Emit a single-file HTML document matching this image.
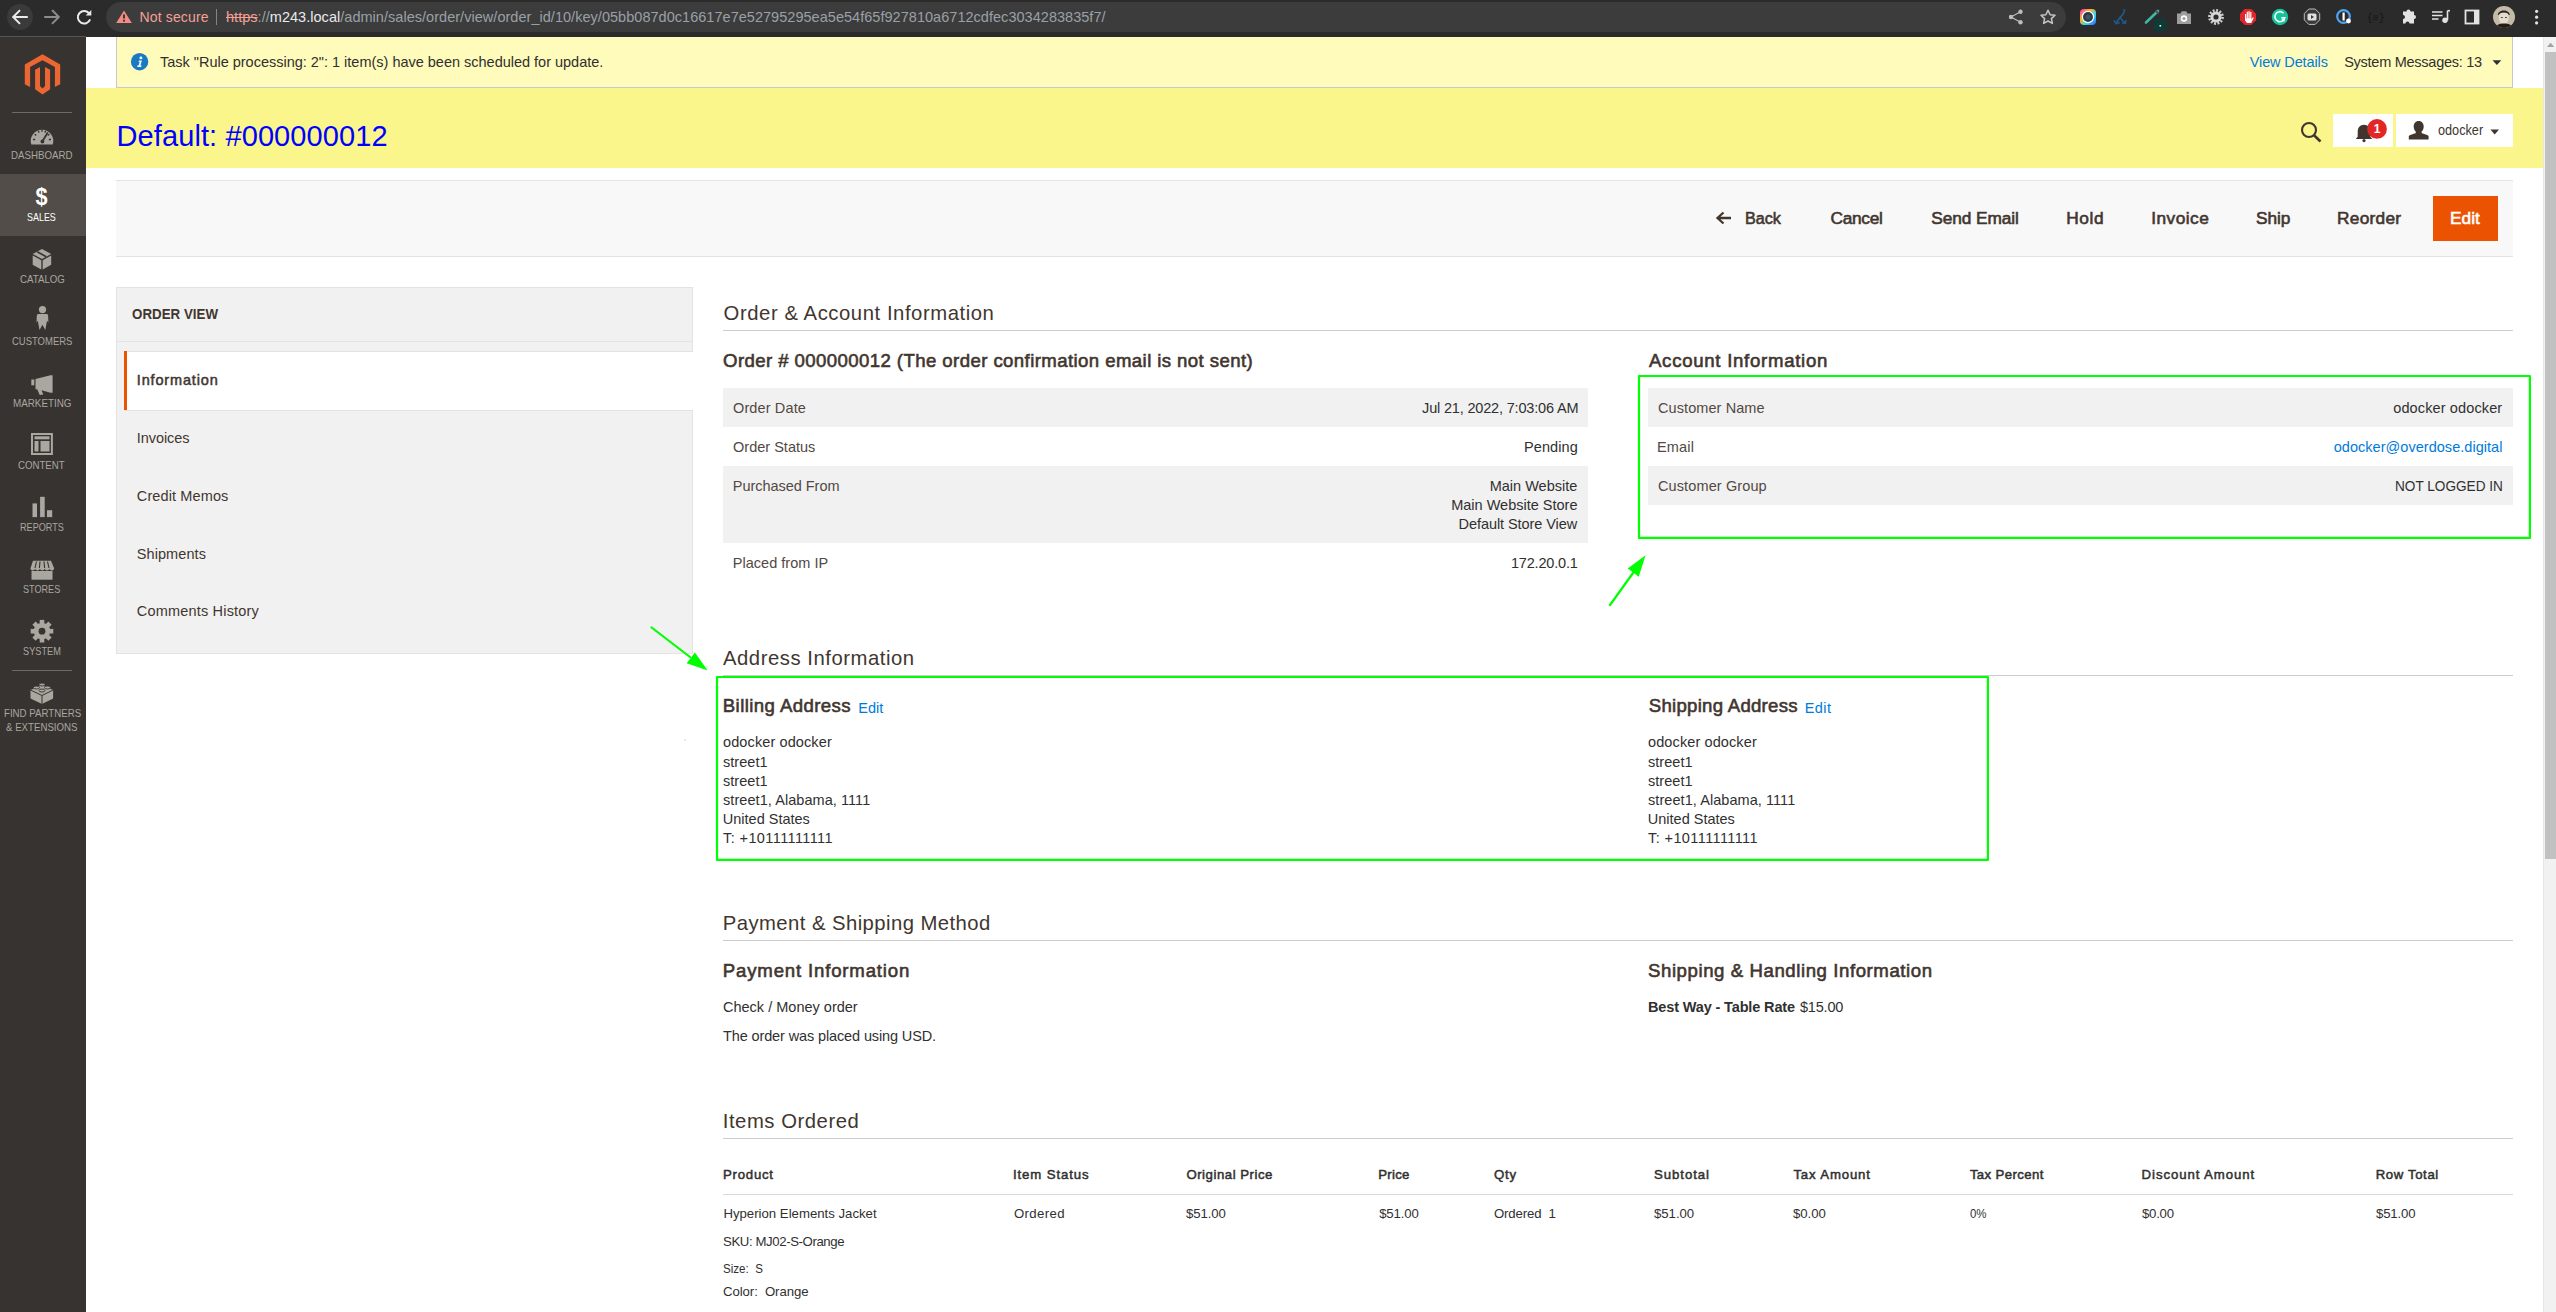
<!DOCTYPE html>
<html><head><meta charset="utf-8"><title>Order #000000012</title>
<style>
html,body{margin:0;padding:0}
body{width:2556px;height:1312px;overflow:hidden;position:relative;background:#fff;font-family:"Liberation Sans",sans-serif}
.b{position:absolute}
.t{position:absolute;white-space:nowrap;line-height:1;font-family:"Liberation Sans",sans-serif}
svg{position:absolute;left:0;top:0}

</style></head><body>
<!-- browser toolbar -->
<div class="b" style="left:0;top:0;width:2556px;height:37px;background:#2b2b2b"></div>

<div class="b" style="left:7px;top:4px;width:26px;height:26px;border-radius:13px;background:#3a3a3a"></div>
<div class="b" style="left:106px;top:2px;width:1960px;height:30px;border-radius:15px;background:#3c3c3c"></div>
<!-- sidebar -->
<div class="b" style="left:0;top:36px;width:86px;height:1276px;background:#373330"></div>
<div class="b" style="left:0;top:36px;width:86px;height:1px;background:#555555"></div>
<div class="b" style="left:0;top:174px;width:86px;height:62px;background:#524d49"></div>
<div class="b" style="left:12px;top:112px;width:60px;height:1px;background:#736963"></div>
<div class="b" style="left:12px;top:670px;width:60px;height:1px;background:#736963"></div>
<!-- system message -->
<div class="b" style="left:116px;top:37px;width:2395px;height:50px;background:#fffbbb;border:1px solid #c8c8d0;border-top:0"></div>
<!-- header -->
<div class="b" style="left:86px;top:88px;width:2457px;height:80px;background:#fbf68c"></div>
<div class="b" style="left:2333px;top:114px;width:60px;height:33px;background:#fff"></div>
<div class="b" style="left:2396px;top:114px;width:117px;height:33px;background:#fff"></div>
<!-- action bar -->
<div class="b" style="left:116px;top:180px;width:2397px;height:75px;background:#f8f8f8;border-top:1px solid #e3e3e3;border-bottom:1px solid #e3e3e3"></div>
<div class="b" style="left:2433px;top:196px;width:65px;height:45px;background:#eb5202"></div>
<!-- order view panel -->
<div class="b" style="left:116px;top:287px;width:575px;height:365px;background:#f1f1f1;border:1px solid #e3e3e3"></div>
<div class="b" style="left:117px;top:341px;width:575px;height:1px;background:#e3e3e3"></div>
<div class="b" style="left:124px;top:351px;width:569px;height:58px;background:#fff;border-top:1px solid #e3e3e3;border-bottom:1px solid #e3e3e3"></div>
<div class="b" style="left:124px;top:351px;width:3px;height:59px;background:#eb5202"></div>
<!-- section lines -->
<div class="b" style="left:723px;top:330px;width:1790px;height:1px;background:#cccccc"></div>
<div class="b" style="left:723px;top:675px;width:1790px;height:1px;background:#cccccc"></div>
<div class="b" style="left:723px;top:940px;width:1790px;height:1px;background:#cccccc"></div>
<div class="b" style="left:723px;top:1138px;width:1790px;height:1px;background:#cccccc"></div>
<div class="b" style="left:723px;top:1194px;width:1790px;height:1px;background:#dadada"></div>
<!-- table rows -->
<div class="b" style="left:723px;top:388px;width:865px;height:39px;background:#f1f1f1"></div>
<div class="b" style="left:723px;top:466px;width:865px;height:77px;background:#f1f1f1"></div>
<div class="b" style="left:1648px;top:388px;width:865px;height:39px;background:#f1f1f1"></div>
<div class="b" style="left:1648px;top:466px;width:865px;height:39px;background:#f1f1f1"></div>
<!-- scrollbar -->
<div class="b" style="left:2543px;top:37px;width:13px;height:1275px;background:#f1f1f1;border-left:1px solid #e6e6e6;box-sizing:border-box"></div>
<div class="b" style="left:2545px;top:52px;width:11px;height:807px;background:#c1c1c1"></div>

<svg width="2556" height="1312" viewBox="0 0 2556 1312">
<!-- browser nav icons -->
<g fill="none" stroke="#e8eaed" stroke-width="2" stroke-linecap="square">
 <path d="M26.8 17H14.3M19.3 10.8L13.2 17l6.1 6.2"/>
</g>
<g fill="none" stroke="#8c8c8c" stroke-width="2" stroke-linecap="square">
 <path d="M45.2 17h12.5M52.7 10.8L58.8 17l-6.1 6.2"/>
</g>
<g fill="none" stroke="#e8eaed" stroke-width="2">
 <path d="M89.3 13.6A6.3 6.3 0 1 0 90.1 19.4"/>
</g>
<path d="M91.3 10v5.6h-5.6z" fill="#e8eaed"/>
<path d="M124 10.6L131.8 23H116.2z" fill="#f28b82"/>
<rect x="123.1" y="14.5" width="1.8" height="4" fill="#2b2b2b"/><rect x="123.1" y="19.8" width="1.8" height="1.8" fill="#2b2b2b"/>
<rect x="216" y="9" width="1" height="16" fill="#80868b"/>
<!-- share / star -->
<g fill="#bdbdbd"><circle cx="2011" cy="17" r="2.2"/><circle cx="2020.5" cy="11.8" r="2.2"/><circle cx="2020.5" cy="22.3" r="2.2"/></g>
<path d="M2011 17L2020.5 11.8M2011 17L2020.5 22.3" stroke="#bdbdbd" stroke-width="1.2"/>
<path d="M2048 10.2l2.1 4.5 4.9.6-3.6 3.3 1 4.8-4.4-2.4-4.4 2.4 1-4.8-3.6-3.3 4.9-.6z" fill="none" stroke="#c4c7c5" stroke-width="1.5" stroke-linejoin="round"/>
<!-- extensions -->
<defs>
 <linearGradient id="rb" x1="0" y1="0" x2="1" y2="1"><stop offset="0" stop-color="#ff2bd6"/><stop offset=".35" stop-color="#ffb21e"/><stop offset=".65" stop-color="#2fd3f5"/><stop offset="1" stop-color="#3b5bff"/></linearGradient>
 <radialGradient id="av" cx=".5" cy=".45" r=".55"><stop offset="0" stop-color="#d9d2c6"/><stop offset=".45" stop-color="#a59a8a"/><stop offset="1" stop-color="#3b3128"/></radialGradient>
</defs>
<rect x="2080" y="9" width="16" height="16" rx="4" fill="url(#rb)"/>
<circle cx="2088" cy="17" r="6.2" fill="#fff"/><circle cx="2088" cy="17" r="5" fill="#2e3b46"/><circle cx="2088" cy="17" r="2.5" fill="#3e5566"/>
<path d="M2124.3 9c.8 3.5-1.5 6-4.3 8.5l-3.8 5.5M2120 17.5l4.8 5.5" fill="none" stroke="#1d5a8a" stroke-width="1.7"/><path d="M2114 20.5l2.2 3.2 3.5-1.3M2122 22.8l3.3.5.9-3.4" fill="none" stroke="#1d5a8a" stroke-width="1.6"/>
<path d="M2146 22.5L2158 11" stroke="#3fb7a6" stroke-width="2.6" stroke-linecap="round"/>
<path d="M2155.5 10.5l3 3" stroke="#555" stroke-width="2.4"/>
<rect x="2154" y="19" width="12" height="12" rx="1.5" fill="#0d3b35"/><rect x="2159.5" y="25" width="1.6" height="1.6" fill="#fff"/>
<path d="M2177 13.5h3.5l1.3-2.3h4.4l1.3 2.3h3.5v10.5h-14z" fill="#9e9e9e"/><circle cx="2184" cy="18.5" r="3.2" fill="#fff"/><circle cx="2184" cy="18.5" r="1.6" fill="#9e9e9e"/>
<circle cx="2216" cy="17" r="6.6" fill="none" stroke="#cfcfcf" stroke-width="2.6" stroke-dasharray="1.9 1.55"/><circle cx="2216" cy="17" r="5.6" fill="#d6d6d6"/><circle cx="2216" cy="17" r="2.6" fill="#2b2b2b"/>
<path d="M2244.7 9h6.6l4.7 4.7v6.6l-4.7 4.7h-6.6l-4.7-4.7v-6.6z" fill="#e3262b"/>
<path d="M2245 20.5v-6.5h1.2v4.5h.5v-6.8h1.2v6.6h.5v-7.1h1.3v7.1h.5v-6.3h1.2v7.5l1.4-2.2 1 .5-2.6 5.2h-4.2z" fill="#fff"/>
<circle cx="2280" cy="17" r="8.2" fill="#15c39a"/><path d="M2283.5 13.2a5 5 0 1 0 1.3 4.5h-3.5" fill="none" stroke="#fff" stroke-width="1.6"/><path d="M2282 19l2.5 2.3" stroke="#fff" stroke-width="1.5"/>
<path d="M2308.8 9h6.4l4.5 4.5v6.4l-4.5 4.5h-6.4l-4.5-4.5v-6.4z" fill="#3a3a3a" stroke="#bdbdbd" stroke-width="1"/>
<rect x="2307.5" y="13.5" width="9" height="7" rx="1.5" fill="#e0e0e0"/><path d="M2311 15v4l3-2z" fill="#3a3a3a"/>
<circle cx="2343.5" cy="16.5" r="6.3" fill="none" stroke="#4fa3f7" stroke-width="2.2"/><rect x="2342.5" y="12.5" width="2.2" height="8" fill="#fff"/><circle cx="2348.5" cy="21" r="2.4" fill="#fff"/>
<text x="2375.7" y="21" font-family="Liberation Mono" font-size="10" fill="#151515" text-anchor="middle">{≡}</text>
<path d="M2403 11.5h3.5a2 2 0 0 1 4 0h3.5v3.5a2 2 0 0 1 0 4v4.5h-4.5a2 2 0 0 0-4 0H2403v-4.5a2 2 0 0 0 0-4z" fill="#e3e3e3"/>
<path d="M2432 12h10.5M2432 15.5h10.5M2432 19h6.5" stroke="#e3e3e3" stroke-width="1.6"/><path d="M2447.5 10.7v9.5" stroke="#e3e3e3" stroke-width="1.6"/><path d="M2447.5 10.7h2.5" stroke="#e3e3e3" stroke-width="1.6"/><circle cx="2445" cy="20.3" r="2.7" fill="#e3e3e3"/>
<rect x="2465.5" y="10.5" width="13" height="13" fill="none" stroke="#e3e3e3" stroke-width="1.8"/><rect x="2474" y="10.5" width="4.5" height="13" fill="#e3e3e3"/>
<clipPath id="avc"><circle cx="2504" cy="17" r="11"/></clipPath><g clip-path="url(#avc)"><rect x="2493" y="6" width="22" height="22" fill="#c4baa8"/><ellipse cx="2503.8" cy="17.5" rx="5" ry="6.8" fill="#e3dccf"/><path d="M2497.8 15c.3-6 11.7-6 12 0l-1.2-.2c-1-3-8.4-3-9.6 0z" fill="#2e251e"/><path d="M2494 30c1.5-5 5-6.5 10-6.5s8.5 1.5 10 6.5z" fill="#241d17"/><path d="M2500.8 17.5h2M2505 17.5h2" stroke="#5a4a3c" stroke-width="1"/></g>
<g fill="#e3e3e3"><circle cx="2536.6" cy="11.3" r="1.6"/><circle cx="2536.6" cy="17.2" r="1.6"/><circle cx="2536.6" cy="22.9" r="1.6"/></g>

<!-- magento logo -->
<g fill="#ec6631">
 <path d="M42.5 54.3L60.2 64.4V84.2L54.9 86.9V67.1L42.5 60.2L30.1 67.1V86.9L24.8 84.2V64.4Z"/>
 <path d="M35.1 69.7L40 67.1V86.1L42.5 88.4L45 86.1V67.1L50.1 69.7V89.2L42.5 94.5L35.1 89.2Z"/>
</g>
<!-- sidebar icons -->
<g fill="#aaa6a0">
 <path d="M31.3 144.6A11.3 11.3 0 1 1 52.7 144.6Z"/>
 <path d="M33 139.5h2.2M34.6 134.2l1.7 1.2M38.3 130.9l.8 1.7M42 129.9v1.9M45.7 130.9l-.8 1.7M49.4 134.2l-1.7 1.2M51 139.5h-2.2" stroke="#373330" stroke-width="1.3"/>
 <path d="M47.8 132.5L42.6 141" stroke="#373330" stroke-width="1.8"/><circle cx="42.4" cy="141.5" r="1.9" fill="#373330"/>
 <text x="41.6" y="205" font-family="Liberation Sans" font-weight="700" font-size="24" fill="#ffffff" text-anchor="middle" transform="translate(41.6 0) scale(0.9 1) translate(-41.6 0)">$</text>
 <path d="M32.7 254L42 249L51.2 254L42 259Z"/><path d="M32.7 255.5L41.3 260.3V269.5L32.7 264.7Z"/><path d="M51.2 255.5L42.7 260.3V269.5L51.2 264.7Z"/>
 <path d="M37.2 251.7l9 5" stroke="#373330" stroke-width="1.6"/>
 <circle cx="42.5" cy="309.6" r="3.6"/><path d="M38.3 314H46.7Q48 314 48.1 315.5L48.4 322.4L47 320.8L45.3 330L42.4 324.7L39.5 330L37.8 320.8L36.5 322.4L36.8 315.5Q36.9 314 38.3 314Z"/>
 <path d="M31.3 379.5h3v5.8h-3z"/><path d="M35.5 379l15-3.8h2.1v17.6h-2.1l-9-2.5 1.8 4.3-3.6.5-2.5-5.8h-1.7z"/>
 <path d="M31 432.9h21.9v22H31zM33 434.9v18h17.9v-18z"/><rect x="34.5" y="436.3" width="15" height="3"/><rect x="34.5" y="441" width="4" height="10.5"/><rect x="40.5" y="441" width="9" height="10.5"/>
 <rect x="32.5" y="503.4" width="4.5" height="13.7"/><rect x="40.1" y="496.8" width="4.6" height="20.3"/><rect x="47" y="510.2" width="5.2" height="6.9"/>
 <path d="M33 560.7h18l3.1 7.5c0 1.5-1 2.2-2.3 2.2-1.2 0-2-.8-2.3-1.7-.4.9-1.2 1.7-2.4 1.7s-2-.8-2.4-1.7c-.4.9-1.2 1.7-2.4 1.7s-2-.8-2.4-1.7c-.4.9-1.2 1.7-2.4 1.7s-2-.8-2.4-1.7c-.3.9-1.1 1.7-2.3 1.7-1.3 0-2.3-.7-2.3-2.2z"/>
 <rect x="31.5" y="571" width="21" height="8.7"/>
 <path d="M36.5 561.5l-1.5 6.5M40 561.5l-.6 6.5M44 561.5l.6 6.5M47.5 561.5l1.5 6.5" stroke="#373330" stroke-width="1.1"/>
 <circle cx="42" cy="631.2" r="8.3"/>
 <g transform="translate(42 631.2)"><rect x="-2.3" y="-11.3" width="4.6" height="5"/><rect x="-2.3" y="-11.3" width="4.6" height="5" transform="rotate(45)"/><rect x="-2.3" y="-11.3" width="4.6" height="5" transform="rotate(90)"/><rect x="-2.3" y="-11.3" width="4.6" height="5" transform="rotate(135)"/><rect x="-2.3" y="-11.3" width="4.6" height="5" transform="rotate(180)"/><rect x="-2.3" y="-11.3" width="4.6" height="5" transform="rotate(225)"/><rect x="-2.3" y="-11.3" width="4.6" height="5" transform="rotate(270)"/><rect x="-2.3" y="-11.3" width="4.6" height="5" transform="rotate(315)"/></g>
 <circle cx="42" cy="631.2" r="3.4" fill="#373330"/>
 <path d="M30.5 690L42 685L53.1 690V698.5L42 704L30.5 698.5Z"/>
 <path d="M30.5 690L42 695.5L53.1 690M42 695.5V704" fill="none" stroke="#373330" stroke-width="1"/>
 <g stroke="#373330" stroke-width=".9"><ellipse cx="42" cy="684.5" rx="3" ry="1.5"/><ellipse cx="36.5" cy="687.5" rx="3" ry="1.5"/><ellipse cx="47.5" cy="687.5" rx="3" ry="1.5"/><ellipse cx="42" cy="690.5" rx="3" ry="1.5"/></g>
</g>
<!-- info icon -->
<circle cx="139.6" cy="61.7" r="8.7" fill="#1979c3"/>
<circle cx="140.9" cy="57.9" r="1.45" fill="#fff"/><path d="M138.9 60.4h3l-1.5 5.1h1.1l-.3 1.4h-4l.3-1.4h1.1l1.1-3.8h-1.1z" fill="#fff"/>
<path d="M2492.5 60.3h8.8l-4.4 4.7z" fill="#303030"/>
<!-- header icons -->
<circle cx="2309" cy="130" r="7" fill="none" stroke="#41362f" stroke-width="2.1"/>
<path d="M2314 135.2l6.5 6.3" stroke="#41362f" stroke-width="2.6"/>
<path d="M2364 124.7c-4 0-6.3 3-6.3 7.2v4.8l-2 2.3h16.6l-2-2.3v-4.8c0-4.2-2.3-7.2-6.3-7.2z" fill="#41362f"/><circle cx="2364" cy="140.6" r="1.6" fill="#41362f"/>
<circle cx="2377" cy="128.9" r="9.9" fill="#e22626"/>
<text x="2377" y="133.3" font-family="Liberation Sans" font-weight="700" font-size="12" fill="#fff" text-anchor="middle">1</text>
<path d="M2418.7 121c-3.3 0-5 2.5-5 5.5 0 2.2.8 4 2.2 5.3l-.3 1.5c-2.5.7-5.3 1.6-6.8 2.6v3.5h19.8v-3.5c-1.5-1-4.3-1.9-6.8-2.6l-.3-1.5c1.4-1.3 2.2-3.1 2.2-5.3 0-3-1.7-5.5-5-5.5z" fill="#41362f"/>
<path d="M2490.4 129.5h8.6l-4.3 5z" fill="#41362f"/>
<!-- action bar back arrow -->
<path d="M1731 218H1718.5M1723.5 212.5L1717.5 218l6 5.5" fill="none" stroke="#41362f" stroke-width="2.3"/>
<!-- scrollbar arrow -->
<path d="M2547 47h7.3l-3.65-4.2z" fill="#a3a3a3"/>
<!-- annotations -->
<g fill="none" stroke="#00ff00" stroke-width="2.2" stroke-linejoin="round">
 <rect x="1639" y="376" width="890.9" height="161.9"/>
 <rect x="717" y="677" width="1270.9" height="182.9"/>
 <path d="M1610 605L1633 573M651.6 627.5L690 657" stroke-linecap="round"/>
</g>
<g fill="#00ff00">
 <path d="M1645.6 555.2L1627.7 568.5L1638.7 576.8Z"/>
 <path d="M707.7 670.5L694.9 652.5L686.6 663.2Z"/>
 <rect x="684.5" y="739.5" width="1.2" height="1.2" opacity=".6"/>
</g>
</svg>

<div class="t" id="ns" style="left:139.50px;top:10.00px;font-size:14px;color:#f5a097;letter-spacing:0.141px;">Not secure</div>
<div class="t" id="url" style="left:226.00px;top:10.00px;font-size:14.5px;color:#9aa0a6;letter-spacing:0.033px;"><span style="color:#f5a097;text-decoration:line-through">https</span><span style="color:#9aa0a6">://</span><span style="color:#e8eaed">m243.local</span><span style="color:#9aa0a6">/admin/sales/order/view/order_id/10/key/05bb087d0c16617e7e52795295ea5e54f65f927810a6712cdfec3034283835f7/</span></div>
<div class="t" id="msg" style="left:160.00px;top:55.00px;font-size:14.5px;color:#303030;letter-spacing:-0.009px;">Task "Rule processing: 2": 1 item(s) have been scheduled for update.</div>
<div class="t" id="vd" style="left:2249.80px;top:55.00px;font-size:14.5px;color:#007bdb;letter-spacing:-0.130px;">View Details</div>
<div class="t" id="sm" style="left:2344.20px;top:55.00px;font-size:14.5px;color:#303030;letter-spacing:-0.261px;">System Messages: 13</div>
<div class="t" id="title" style="left:116.50px;top:122.00px;font-size:29px;color:#0000ff;letter-spacing:0.102px;">Default: #000000012</div>
<div class="t" id="user" style="left:2437.50px;top:123.00px;font-size:14.5px;color:#41362f;transform:scaleX(0.8751);transform-origin:0 0;">odocker</div>
<div class="t" id="b_back" style="left:1745.20px;top:210.00px;font-size:17.3px;color:#41362f;-webkit-text-stroke:0.6px #41362f;transform:scaleX(0.9355);transform-origin:0 0;">Back</div>
<div class="t" id="b_cancel" style="left:1830.60px;top:210.00px;font-size:17.3px;color:#41362f;-webkit-text-stroke:0.6px #41362f;letter-spacing:-0.320px;">Cancel</div>
<div class="t" id="b_send" style="left:1931.30px;top:210.00px;font-size:17.3px;color:#41362f;-webkit-text-stroke:0.6px #41362f;letter-spacing:-0.082px;">Send Email</div>
<div class="t" id="b_hold" style="left:2066.20px;top:210.00px;font-size:17.3px;color:#41362f;-webkit-text-stroke:0.6px #41362f;letter-spacing:0.667px;">Hold</div>
<div class="t" id="b_inv" style="left:2151.20px;top:210.00px;font-size:17.3px;color:#41362f;-webkit-text-stroke:0.6px #41362f;letter-spacing:0.471px;">Invoice</div>
<div class="t" id="b_ship" style="left:2255.90px;top:210.00px;font-size:17.3px;color:#41362f;-webkit-text-stroke:0.6px #41362f;">Ship</div>
<div class="t" id="b_reo" style="left:2337.00px;top:210.00px;font-size:17.3px;color:#41362f;-webkit-text-stroke:0.6px #41362f;letter-spacing:0.273px;">Reorder</div>
<div class="t" id="b_edit" style="left:2450.00px;top:210.00px;font-size:17.3px;color:#ffffff;-webkit-text-stroke:0.6px #ffffff;">Edit</div>
<div class="t" id="ov" style="left:131.70px;top:307.30px;font-size:14.5px;color:#41362f;font-weight:700;transform:scaleX(0.9203);transform-origin:0 0;">ORDER VIEW</div>
<div class="t" id="tab1" style="left:136.80px;top:373.21px;font-size:14.5px;color:#41362f;-webkit-text-stroke:0.5px #41362f;letter-spacing:0.840px;">Information</div>
<div class="t" id="tab2" style="left:136.80px;top:431.00px;font-size:14.5px;color:#41362f;letter-spacing:-0.078px;">Invoices</div>
<div class="t" id="tab3" style="left:136.80px;top:489.00px;font-size:14.5px;color:#41362f;letter-spacing:0.117px;">Credit Memos</div>
<div class="t" id="tab4" style="left:136.80px;top:547.00px;font-size:14.5px;color:#41362f;letter-spacing:0.075px;">Shipments</div>
<div class="t" id="tab5" style="left:136.80px;top:604.00px;font-size:14.5px;color:#41362f;letter-spacing:0.184px;">Comments History</div>
<div class="t" id="m1" style="left:11.10px;top:150.10px;font-size:11px;color:#aaa6a0;transform:scaleX(0.8841);transform-origin:0 0;">DASHBOARD</div>
<div class="t" id="m2" style="left:27.40px;top:212.00px;font-size:11px;color:#ffffff;transform:scaleX(0.8126);transform-origin:0 0;">SALES</div>
<div class="t" id="m3" style="left:19.80px;top:274.00px;font-size:11px;color:#aaa6a0;transform:scaleX(0.8816);transform-origin:0 0;">CATALOG</div>
<div class="t" id="m4" style="left:11.50px;top:336.21px;font-size:11px;color:#aaa6a0;transform:scaleX(0.8613);transform-origin:0 0;">CUSTOMERS</div>
<div class="t" id="m5" style="left:13.00px;top:398.00px;font-size:11px;color:#aaa6a0;transform:scaleX(0.8943);transform-origin:0 0;">MARKETING</div>
<div class="t" id="m6" style="left:18.20px;top:460.10px;font-size:11px;color:#aaa6a0;transform:scaleX(0.8778);transform-origin:0 0;">CONTENT</div>
<div class="t" id="m7" style="left:19.60px;top:522.00px;font-size:11px;color:#aaa6a0;transform:scaleX(0.8274);transform-origin:0 0;">REPORTS</div>
<div class="t" id="m8" style="left:23.10px;top:583.71px;font-size:11px;color:#aaa6a0;transform:scaleX(0.8271);transform-origin:0 0;">STORES</div>
<div class="t" id="m9" style="left:23.30px;top:646.21px;font-size:11px;color:#aaa6a0;transform:scaleX(0.8360);transform-origin:0 0;">SYSTEM</div>
<div class="t" id="m10" style="left:3.80px;top:708.00px;font-size:11px;color:#aaa6a0;transform:scaleX(0.8806);transform-origin:0 0;">FIND PARTNERS</div>
<div class="t" id="m11" style="left:5.70px;top:721.71px;font-size:11px;color:#aaa6a0;transform:scaleX(0.8792);transform-origin:0 0;">&amp; EXTENSIONS</div>
<div class="t" id="s1" style="left:723.60px;top:303.00px;font-size:20.3px;color:#41362f;letter-spacing:0.554px;">Order &amp; Account Information</div>
<div class="t" id="s1a" style="left:723.00px;top:352.00px;font-size:18.6px;color:#41362f;-webkit-text-stroke:0.6px #41362f;letter-spacing:0.413px;">Order # 000000012 (The order confirmation email is not sent)</div>
<div class="t" id="l1" style="left:733.00px;top:401.00px;font-size:14.5px;color:#514943;letter-spacing:0.128px;">Order Date</div>
<div class="t" id="l2" style="left:733.00px;top:440.00px;font-size:14.5px;color:#514943;letter-spacing:0.013px;">Order Status</div>
<div class="t" id="l3" style="left:732.80px;top:478.71px;font-size:14.5px;color:#514943;letter-spacing:-0.036px;">Purchased From</div>
<div class="t" id="l4" style="left:732.80px;top:556.00px;font-size:14.5px;color:#514943;letter-spacing:0.018px;">Placed from IP</div>
<div class="t" id="v1" style="left:1422.10px;top:401.00px;font-size:14.5px;color:#303030;letter-spacing:-0.175px;">Jul 21, 2022, 7:03:06 AM</div>
<div class="t" id="v2" style="left:1524.00px;top:440.00px;font-size:14.5px;color:#303030;letter-spacing:0.095px;">Pending</div>
<div class="t" id="v3" style="left:1489.70px;top:478.71px;font-size:14.5px;color:#303030;letter-spacing:0.003px;">Main Website</div>
<div class="t" id="v4" style="left:1451.20px;top:497.71px;font-size:14.5px;color:#303030;">Main Website Store</div>
<div class="t" id="v5" style="left:1458.60px;top:516.71px;font-size:14.5px;color:#303030;letter-spacing:-0.076px;">Default Store View</div>
<div class="t" id="v6" style="left:1510.90px;top:556.00px;font-size:14.5px;color:#303030;letter-spacing:-0.175px;">172.20.0.1</div>
<div class="t" id="s1b" style="left:1649.00px;top:352.00px;font-size:18.6px;color:#41362f;-webkit-text-stroke:0.6px #41362f;letter-spacing:0.722px;">Account Information</div>
<div class="t" id="al1" style="left:1658.00px;top:401.00px;font-size:14.5px;color:#514943;letter-spacing:0.083px;">Customer Name</div>
<div class="t" id="al2" style="left:1657.00px;top:440.00px;font-size:14.5px;color:#514943;letter-spacing:0.150px;">Email</div>
<div class="t" id="al3" style="left:1658.00px;top:479.00px;font-size:14.5px;color:#514943;letter-spacing:0.113px;">Customer Group</div>
<div class="t" id="av1" style="left:2393.20px;top:401.00px;font-size:14.5px;color:#303030;letter-spacing:0.129px;">odocker odocker</div>
<div class="t" id="av2" style="left:2333.70px;top:440.00px;font-size:14.5px;color:#007bdb;letter-spacing:0.038px;">odocker@overdose.digital</div>
<div class="t" id="av3" style="left:2395.20px;top:479.00px;font-size:14.5px;color:#303030;transform:scaleX(0.9387);transform-origin:0 0;">NOT LOGGED IN</div>
<div class="t" id="s2" style="left:723.00px;top:647.90px;font-size:20.3px;color:#41362f;letter-spacing:0.531px;">Address Information</div>
<div class="t" id="bah" style="left:722.80px;top:697.21px;font-size:18.6px;color:#41362f;-webkit-text-stroke:0.6px #41362f;letter-spacing:0.418px;">Billing Address</div>
<div class="t" id="bae" style="left:858.30px;top:700.71px;font-size:14.5px;color:#007bdb;letter-spacing:0.003px;">Edit</div>
<div class="t" id="ba0" style="left:723.00px;top:735.21px;font-size:14.5px;color:#303030;letter-spacing:0.109px;">odocker odocker</div>
<div class="t" id="ba1" style="left:723.00px;top:754.50px;font-size:14.5px;color:#303030;letter-spacing:0.036px;">street1</div>
<div class="t" id="ba2" style="left:723.00px;top:773.60px;font-size:14.5px;color:#303030;letter-spacing:0.036px;">street1</div>
<div class="t" id="ba3" style="left:723.00px;top:793.30px;font-size:14.5px;color:#303030;letter-spacing:0.062px;">street1, Alabama, 1111</div>
<div class="t" id="ba4" style="left:722.80px;top:812.00px;font-size:14.5px;color:#303030;">United States</div>
<div class="t" id="ba5" style="left:723.00px;top:830.90px;font-size:14.5px;color:#303030;letter-spacing:0.407px;">T: +10111111111</div>
<div class="t" id="sah" style="left:1648.80px;top:697.21px;font-size:18.6px;color:#41362f;-webkit-text-stroke:0.6px #41362f;letter-spacing:0.267px;">Shipping Address</div>
<div class="t" id="sae" style="left:1804.80px;top:700.71px;font-size:14.5px;color:#007bdb;letter-spacing:0.398px;">Edit</div>
<div class="t" id="sa0" style="left:1648.00px;top:735.21px;font-size:14.5px;color:#303030;letter-spacing:0.109px;">odocker odocker</div>
<div class="t" id="sa1" style="left:1648.00px;top:754.50px;font-size:14.5px;color:#303030;letter-spacing:0.036px;">street1</div>
<div class="t" id="sa2" style="left:1648.00px;top:773.60px;font-size:14.5px;color:#303030;letter-spacing:0.036px;">street1</div>
<div class="t" id="sa3" style="left:1648.00px;top:793.30px;font-size:14.5px;color:#303030;letter-spacing:0.062px;">street1, Alabama, 1111</div>
<div class="t" id="sa4" style="left:1647.80px;top:812.00px;font-size:14.5px;color:#303030;">United States</div>
<div class="t" id="sa5" style="left:1648.00px;top:830.90px;font-size:14.5px;color:#303030;letter-spacing:0.407px;">T: +10111111111</div>
<div class="t" id="s3" style="left:722.80px;top:913.00px;font-size:20.3px;color:#41362f;letter-spacing:0.433px;">Payment &amp; Shipping Method</div>
<div class="t" id="p1" style="left:722.80px;top:962.30px;font-size:18.6px;color:#41362f;-webkit-text-stroke:0.6px #41362f;letter-spacing:0.833px;">Payment Information</div>
<div class="t" id="p2" style="left:723.00px;top:1000.00px;font-size:14.5px;color:#303030;letter-spacing:0.006px;">Check / Money order</div>
<div class="t" id="p3" style="left:723.00px;top:1029.40px;font-size:14.5px;color:#303030;letter-spacing:-0.122px;">The order was placed using USD.</div>
<div class="t" id="p4" style="left:1648.00px;top:962.10px;font-size:18.6px;color:#41362f;-webkit-text-stroke:0.6px #41362f;letter-spacing:0.579px;">Shipping &amp; Handling Information</div>
<div class="t" id="p5" style="left:1648.00px;top:1000.00px;font-size:14.5px;color:#303030;font-weight:700;letter-spacing:-0.140px;">Best Way - Table Rate</div>
<div class="t" id="p6" style="left:1800.00px;top:1000.00px;font-size:14.5px;color:#303030;letter-spacing:-0.200px;">$15.00</div>
<div class="t" id="s4" style="left:722.80px;top:1110.90px;font-size:20.3px;color:#41362f;letter-spacing:0.528px;">Items Ordered</div>
<div class="t" id="h1" style="left:723.00px;top:1168.00px;font-size:13.2px;color:#303030;-webkit-text-stroke:0.5px #303030;letter-spacing:0.763px;">Product</div>
<div class="t" id="h2" style="left:1012.90px;top:1168.00px;font-size:13.2px;color:#303030;-webkit-text-stroke:0.5px #303030;letter-spacing:0.900px;">Item Status</div>
<div class="t" id="h3" style="left:1186.40px;top:1168.00px;font-size:13.2px;color:#303030;-webkit-text-stroke:0.5px #303030;letter-spacing:0.532px;">Original Price</div>
<div class="t" id="h4" style="left:1378.20px;top:1168.00px;font-size:13.2px;color:#303030;-webkit-text-stroke:0.5px #303030;letter-spacing:0.300px;">Price</div>
<div class="t" id="h5" style="left:1493.90px;top:1168.00px;font-size:13.2px;color:#303030;-webkit-text-stroke:0.5px #303030;letter-spacing:0.900px;">Qty</div>
<div class="t" id="h6" style="left:1654.00px;top:1168.00px;font-size:13.2px;color:#303030;-webkit-text-stroke:0.5px #303030;letter-spacing:0.947px;">Subtotal</div>
<div class="t" id="h7" style="left:1793.40px;top:1168.00px;font-size:13.2px;color:#303030;-webkit-text-stroke:0.5px #303030;letter-spacing:0.853px;">Tax Amount</div>
<div class="t" id="h8" style="left:1969.90px;top:1168.00px;font-size:13.2px;color:#303030;-webkit-text-stroke:0.5px #303030;letter-spacing:0.380px;">Tax Percent</div>
<div class="t" id="h9" style="left:2141.60px;top:1168.00px;font-size:13.2px;color:#303030;-webkit-text-stroke:0.5px #303030;letter-spacing:0.915px;">Discount Amount</div>
<div class="t" id="h10" style="left:2375.70px;top:1168.00px;font-size:13.2px;color:#303030;-webkit-text-stroke:0.5px #303030;letter-spacing:0.613px;">Row Total</div>
<div class="t" id="r1" style="left:723.40px;top:1207.21px;font-size:13.2px;color:#303030;">Hyperion Elements Jacket</div>
<div class="t" id="r2" style="left:1013.90px;top:1207.21px;font-size:13.2px;color:#303030;letter-spacing:0.404px;">Ordered</div>
<div class="t" id="r3" style="left:1186.00px;top:1207.21px;font-size:13.2px;color:#303030;letter-spacing:-0.120px;">$51.00</div>
<div class="t" id="r4" style="left:1379.20px;top:1207.21px;font-size:13.2px;color:#303030;letter-spacing:-0.160px;">$51.00</div>
<div class="t" id="r5" style="left:1493.90px;top:1207.21px;font-size:13.2px;color:#303030;letter-spacing:-0.112px;">Ordered&nbsp;&nbsp;1</div>
<div class="t" id="r6" style="left:1654.00px;top:1207.21px;font-size:13.2px;color:#303030;letter-spacing:-0.040px;">$51.00</div>
<div class="t" id="r7" style="left:1793.00px;top:1207.21px;font-size:13.2px;color:#303030;letter-spacing:-0.050px;">$0.00</div>
<div class="t" id="r8" style="left:1970.00px;top:1207.21px;font-size:13.2px;color:#303030;transform:scaleX(0.8688);transform-origin:0 0;">0%</div>
<div class="t" id="r9" style="left:2142.00px;top:1207.21px;font-size:13.2px;color:#303030;letter-spacing:-0.250px;">$0.00</div>
<div class="t" id="r10" style="left:2376.00px;top:1207.21px;font-size:13.2px;color:#303030;letter-spacing:-0.160px;">$51.00</div>
<div class="t" id="r11" style="left:723.00px;top:1235.00px;font-size:13.2px;color:#303030;letter-spacing:-0.395px;">SKU: MJ02-S-Orange</div>
<div class="t" id="r12" style="left:723.00px;top:1262.00px;font-size:13.2px;color:#303030;transform:scaleX(0.8780);transform-origin:0 0;">Size:&nbsp; S</div>
<div class="t" id="r13" style="left:723.00px;top:1285.00px;font-size:13.2px;color:#303030;letter-spacing:-0.077px;">Color:&nbsp; Orange</div>
</body></html>
